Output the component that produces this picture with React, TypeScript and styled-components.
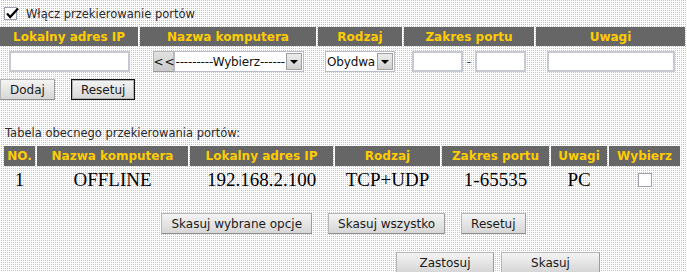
import React from "react";
import styled, { createGlobalStyle } from "styled-components";

const Global = createGlobalStyle`
  html, body { margin: 0; padding: 0; }
  body {
    width: 687px;
    height: 272px;
    overflow: hidden;
    background-color: #fff;
    background-image: conic-gradient(from 90deg at 1px 1px, #fff 0 75%, #c4c4c4 0);
    background-size: 2px 2px;
    font-family: "DejaVu Sans", Verdana, sans-serif;
    color: #222;
  }
`;

const Page = styled.div`
  display: flex;
  flex-direction: column;
  width: 687px;
`;

const EnableRow = styled.label`
  display: flex;
  align-items: center;
  gap: 9px;
  height: 27px;
  padding-left: 4px;
  font-size: 11.5px;
  color: #2a2a2a;
`;

const CheckBox = styled.span<{ $size: number }>`
  position: relative;
  display: inline-block;
  width: ${(p) => p.$size}px;
  height: ${(p) => p.$size}px;
  box-sizing: border-box;
  background: #fff;
  border: 1px solid #9ea2b0;
  flex: none;
`;

const CheckMark = styled.svg`
  position: absolute;
  left: 0px;
  top: -2px;
`;

const Grid = styled.div<{ $cols: string; $left?: number }>`
  display: grid;
  grid-template-columns: ${(p) => p.$cols};
  column-gap: 2px;
  row-gap: 2px;
  margin-left: ${(p) => p.$left ?? 0}px;
`;

const HeadCell = styled.div<{ $h: number }>`
  height: ${(p) => p.$h}px;
  background: #666666;
  color: #ffcc00;
  font-weight: bold;
  font-size: 12px;
  display: flex;
  align-items: center;
  justify-content: center;
  white-space: nowrap;
`;

const Cell = styled.div<{ $h: number }>`
  height: ${(p) => p.$h}px;
  display: flex;
  align-items: center;
  justify-content: center;
`;

const DataCell = styled(Cell)`
  font-family: "Liberation Serif", "Times New Roman", serif;
  font-size: 19px;
  color: #000;
`;

const TextInput = styled.input<{ $w: number }>`
  width: ${(p) => p.$w}px;
  height: 21px;
  box-sizing: border-box;
  margin: 0;
  padding: 0 2px;
  background: #fff;
  border: 2px solid #c6c9d2;
  outline: none;
  font-family: "DejaVu Sans", sans-serif;
  font-size: 12px;
`;

const Dash = styled.span`
  margin: 0 4px;
  font-size: 12px;
  color: #333;
`;

const Button = styled.button<{ $w?: number; $focused?: boolean }>`
  height: 21px;
  ${(p) => (p.$w ? `width: ${p.$w}px;` : "padding: 0 9px;")}
  box-sizing: border-box;
  margin: 0;
  font-family: "DejaVu Sans", Verdana, sans-serif;
  font-size: 12px;
  color: #1a1a1a;
  background: linear-gradient(#f4f4f4, #d6d6d6);
  border: 1px solid #b6b6b6;
  border-right-color: #9c9c9c;
  border-bottom-color: #8e8e8e;
  ${(p) =>
    p.$focused
      ? "border: 1px solid #111; box-shadow: inset 0 0 0 1px #b0b0b0;"
      : ""}
  white-space: nowrap;
  cursor: pointer;
`;

const ArrowsButton = styled.button`
  width: 21px;
  height: 21px;
  box-sizing: border-box;
  margin: 0;
  padding: 0;
  font-family: "DejaVu Sans", sans-serif;
  font-size: 12px;
  letter-spacing: 1px;
  color: #111;
  background: linear-gradient(#e2e2e2, #cacaca);
  border: 1px solid #b4b4b4;
  border-bottom-color: #9a9a9a;
`;

const Select = styled.div<{ $w: number }>`
  width: ${(p) => p.$w}px;
  height: 21px;
  box-sizing: border-box;
  display: flex;
  align-items: center;
  background: #fff;
  border: 1px solid #b9bcc6;
  font-size: 12px;
  color: #111;
  overflow: hidden;
`;

const SelectText = styled.span`
  flex: 1;
  overflow: hidden;
  white-space: nowrap;
  padding-left: 1px;
  letter-spacing: -0.15px;
`;

const ArrowBox = styled.span`
  width: 16px;
  height: 17px;
  box-sizing: border-box;
  margin-right: 1px;
  flex: none;
  display: flex;
  align-items: center;
  justify-content: center;
  background: linear-gradient(#ececec, #cfcfcf);
  border: 1px solid #a0a0a0;
`;

const Triangle = styled.span`
  width: 0;
  height: 0;
  border-left: 4px solid transparent;
  border-right: 4px solid transparent;
  border-top: 4px solid #000;
`;

const ButtonRow = styled.div<{ $top: number; $justify?: string; $gap: number; $pl?: number }>`
  display: flex;
  justify-content: ${(p) => p.$justify ?? "flex-start"};
  gap: ${(p) => p.$gap}px;
  margin-top: ${(p) => p.$top}px;
  padding-left: ${(p) => p.$pl ?? 0}px;
`;

const Caption = styled.div`
  margin-top: 26px;
  padding-left: 5px;
  height: 14px;
  line-height: 14px;
  font-size: 11.5px;
  color: #2a2a2a;
`;

const Gap = styled.div<{ $h: number }>`
  height: ${(p) => p.$h}px;
`;

const Check: React.FC<{ checked?: boolean; size: number }> = ({ checked, size }) => (
  <CheckBox $size={size}>
    {checked && (
      <CheckMark width="15" height="14" viewBox="0 0 15 14">
        <path d="M2 7.5 L5.2 11 L13 2.5" fill="none" stroke="#000" strokeWidth="2.2" />
      </CheckMark>
    )}
  </CheckBox>
);

const Dropdown: React.FC<{ w: number; text: string }> = ({ w, text }) => (
  <Select $w={w}>
    <SelectText>{text}</SelectText>
    <ArrowBox>
      <Triangle />
    </ArrowBox>
  </Select>
);

export default function App() {
  return (
    <Page>
      <Global />
      <EnableRow>
        <Check checked size={13} />
        Włącz przekierowanie portów
      </EnableRow>

      <Grid $cols="138px 176px 84px 130px 149px">
        <HeadCell $h={19}>Lokalny adres IP</HeadCell>
        <HeadCell $h={19}>Nazwa komputera</HeadCell>
        <HeadCell $h={19}>Rodzaj</HeadCell>
        <HeadCell $h={19}>Zakres portu</HeadCell>
        <HeadCell $h={19}>Uwagi</HeadCell>

        <Cell $h={27}>
          <TextInput $w={121} />
        </Cell>
        <Cell $h={27}>
          <ArrowsButton>&lt;&lt;</ArrowsButton>
          <Dropdown w={130} text="---------Wybierz------" />
        </Cell>
        <Cell $h={27}>
          <Dropdown w={70} text="Obydwa" />
        </Cell>
        <Cell $h={27}>
          <TextInput $w={51} />
          <Dash>-</Dash>
          <TextInput $w={51} />
        </Cell>
        <Cell $h={27}>
          <TextInput $w={128} />
        </Cell>
      </Grid>

      <ButtonRow $top={4} $gap={16}>
        <Button>Dodaj</Button>
        <Button $focused>Resetuj</Button>
      </ButtonRow>

      <Caption>Tabela obecnego przekierowania portów:</Caption>
      <Gap $h={6} />

      <Grid $cols="31px 151px 143px 105px 107px 56px 71px" $left={4}>
        <HeadCell $h={20}>NO.</HeadCell>
        <HeadCell $h={20}>Nazwa komputera</HeadCell>
        <HeadCell $h={20}>Lokalny adres IP</HeadCell>
        <HeadCell $h={20}>Rodzaj</HeadCell>
        <HeadCell $h={20}>Zakres portu</HeadCell>
        <HeadCell $h={20}>Uwagi</HeadCell>
        <HeadCell $h={20}>Wybierz</HeadCell>

        <DataCell $h={24}>1</DataCell>
        <DataCell $h={24}>OFFLINE</DataCell>
        <DataCell $h={24}>192.168.2.100</DataCell>
        <DataCell $h={24}>TCP+UDP</DataCell>
        <DataCell $h={24}>1-65535</DataCell>
        <DataCell $h={24}>PC</DataCell>
        <Cell $h={24}>
          <Check size={14} />
        </Cell>
      </Grid>

      <ButtonRow $top={21} $gap={16} $justify="center">
        <Button>Skasuj wybrane opcje</Button>
        <Button>Skasuj wszystko</Button>
        <Button>Resetuj</Button>
      </ButtonRow>

      <ButtonRow $top={18} $gap={7} $pl={396}>
        <Button $w={98}>Zastosuj</Button>
        <Button $w={99}>Skasuj</Button>
      </ButtonRow>
    </Page>
  );
}
